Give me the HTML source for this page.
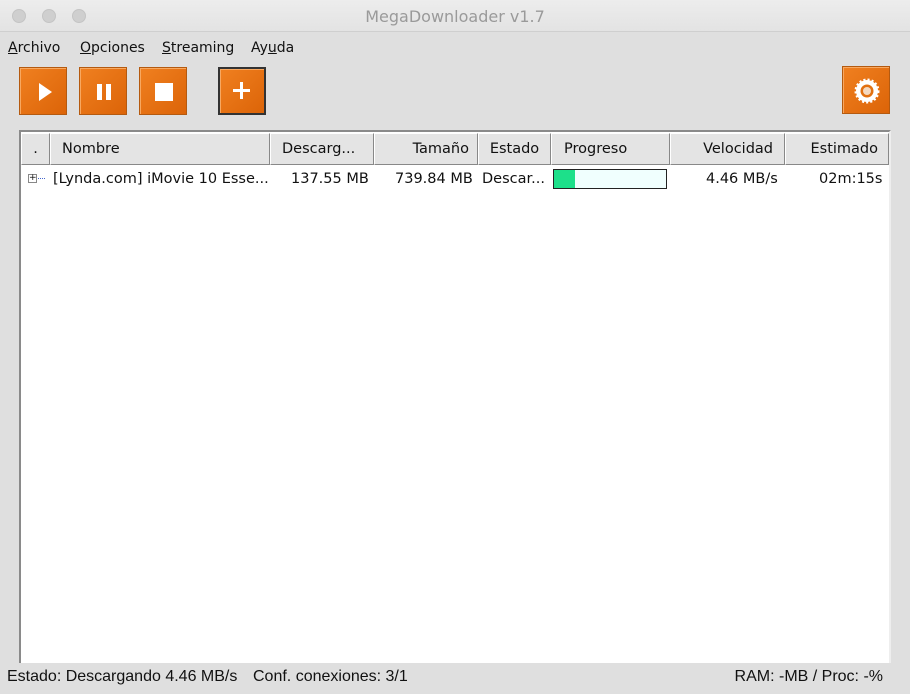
<!DOCTYPE html>
<html><head><style>
*{margin:0;padding:0;box-sizing:border-box}
body{width:910px;height:694px;background:#dfdfdf;font-family:"DejaVu Sans","Liberation Sans",sans-serif;font-size:13px;color:#111;position:relative;overflow:hidden}
.title{position:absolute;left:0;top:0;width:910px;height:32px;background:linear-gradient(#ededed,#e3e3e3);border-bottom:1px solid #cfcfcf;text-align:center;line-height:34px;font-family:"DejaVu Sans",sans-serif;font-size:16px;color:#9a9a9a}
.dot{position:absolute;top:9px;width:14px;height:14px;border-radius:50%;background:#cfcfcf;border:1px solid #c4c4c4}
.menu{position:absolute;top:40px;font-size:14px}
.menu span{position:absolute;white-space:nowrap}
.btn{position:absolute;top:67px;width:48px;height:48px;background:linear-gradient(135deg,#f08020,#dc6408);border:1px solid #b45a10;box-shadow:inset 1px 1px 0 #f8a860}
.hdr{position:absolute;top:133px;height:32px;border:1px solid #888;border-top-color:#fff;border-left-color:#fff;background:#e4e4e4;line-height:30px;font-size:14.5px;white-space:nowrap;overflow:hidden}
.cell{position:absolute;top:168px;height:22px;line-height:22px;font-size:14.5px;white-space:nowrap}
.st{position:absolute;top:668px;font-size:16px;white-space:nowrap;font-family:'Liberation Sans',sans-serif}
</style></head><body>
<div class="title">MegaDownloader v1.7</div>
<div class="dot" style="left:12px"></div><div class="dot" style="left:42px"></div><div class="dot" style="left:72px"></div>
<div class="menu"><span style="left:8px"><u>A</u>rchivo</span><span style="left:80px"><u>O</u>pciones</span><span style="left:162px"><u>S</u>treaming</span><span style="left:251px">Ay<u>u</u>da</span></div>
<div class="btn" style="left:19px"><svg width="48" height="48"><polygon points="19,15 19,33 32,24" fill="#fff"/></svg></div>
<div class="btn" style="left:79px"><svg width="48" height="48"><rect x="17" y="16" width="5" height="16" fill="#fff"/><rect x="26" y="16" width="5" height="16" fill="#fff"/></svg></div>
<div class="btn" style="left:139px"><svg width="48" height="48"><rect x="15" y="15" width="18" height="18" fill="#fff"/></svg></div>
<div class="btn" style="left:218px;border:2px solid #333"><svg width="44" height="44"><rect x="20" y="13" width="3" height="17" fill="#fff"/><rect x="13" y="20" width="17" height="3" fill="#fff"/></svg></div>
<div class="btn" style="left:842px;top:66px"><svg width="48" height="48"><circle cx="24" cy="24" r="11" fill="#fff" stroke="#fff" stroke-width="3" stroke-dasharray="2 2"/><circle cx="24" cy="24" r="6.5" fill="#e27010"/><circle cx="24" cy="24" r="4" fill="#f4d8c0"/></svg></div>
<div style="position:absolute;left:19px;top:130px;width:872px;height:533px;background:#fff;border:2px solid #8a8a8a;border-right-color:#eee;border-bottom:none"></div>
<div class="hdr" style="left:21px;width:29px;text-align:center">.</div>
<div class="hdr" style="left:50px;width:220px;padding-left:11px">Nombre</div>
<div class="hdr" style="left:270px;width:104px;padding-left:11px">Descarg...</div>
<div class="hdr" style="left:374px;width:104px;text-align:right;padding-right:8px">Tamaño</div>
<div class="hdr" style="left:478px;width:73px;text-align:center">Estado</div>
<div class="hdr" style="left:551px;width:119px;padding-left:12px">Progreso</div>
<div class="hdr" style="left:670px;width:115px;text-align:right;padding-right:11px">Velocidad</div>
<div class="hdr" style="left:785px;width:104px;text-align:right;padding-right:10px">Estimado</div>
<div style="position:absolute;left:28px;top:174px;width:9px;height:9px;border:1px solid #888;font-size:9px;line-height:7px;text-align:center">+</div>
<div style="position:absolute;left:38px;top:178px;width:7px;border-top:1px dotted #46c"></div>
<div class="cell" style="left:53px">[Lynda.com] iMovie 10 Esse...</div>
<div class="cell" style="left:291px">137.55 MB</div>
<div class="cell" style="left:395px">739.84 MB</div>
<div class="cell" style="left:482px">Descar...</div>
<div style="position:absolute;left:553px;top:169px;width:114px;height:20px;border:1px solid #222;background:#f0fffe"><div style="width:21px;height:18px;background:#1de08a"></div></div>
<div class="cell" style="left:706px">4.46 MB/s</div>
<div class="cell" style="left:819px">02m:15s</div>
<div class="st" style="left:7px">Estado: Descargando 4.46 MB/s</div>
<div class="st" style="left:253px">Conf. conexiones: 3/1</div>
<div class="st" style="right:27px">RAM: -MB / Proc: -%</div>
</body></html>
